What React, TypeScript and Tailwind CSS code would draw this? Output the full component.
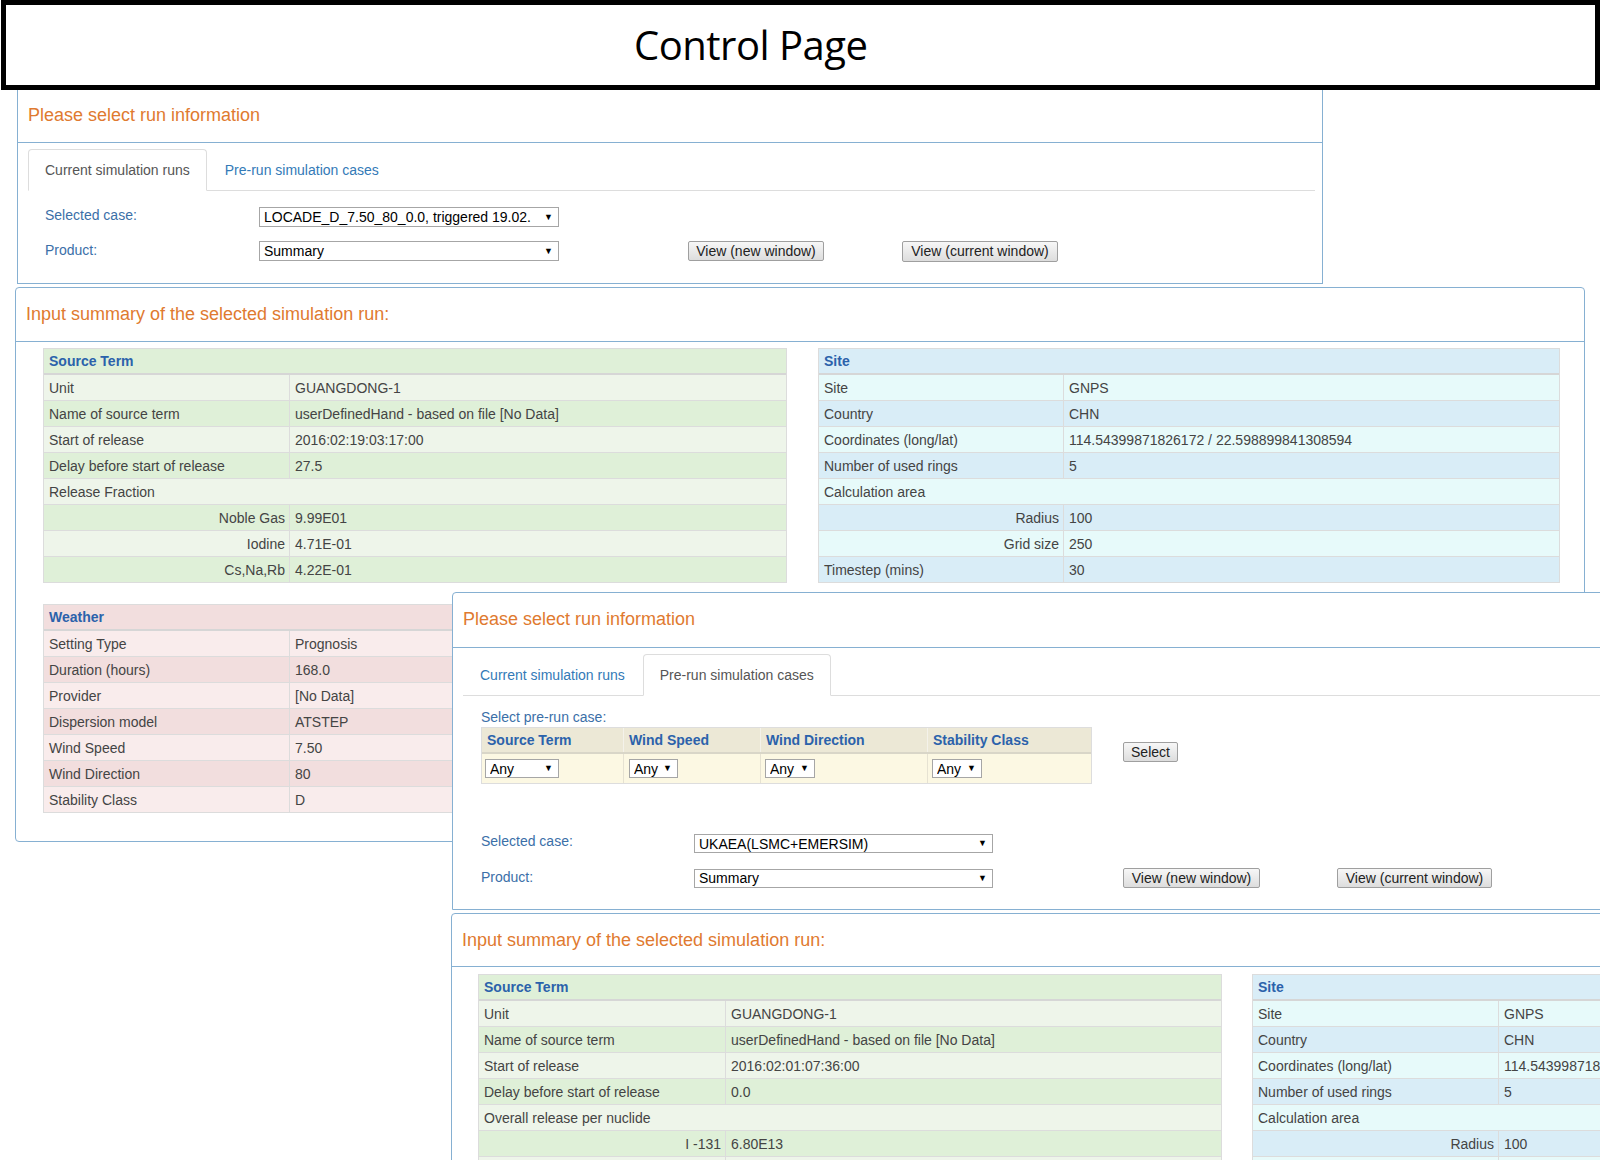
import React from "react";

type Row = { l: string; v?: string; right?: boolean; span?: boolean };
type Theme = { head: string; light: string; dark: string };

const GREEN: Theme = { head: "bg-[#dff0d8]", light: "bg-[#eef5ea]", dark: "bg-[#dff0d8]" };
const BLUE: Theme = { head: "bg-[#d9edf7]", light: "bg-[#e7fafa]", dark: "bg-[#d9edf7]" };
const RED: Theme = { head: "bg-[#f2dede]", light: "bg-[#f9ecec]", dark: "bg-[#f2dede]" };

function Sel({ text, className }: { text: string; className: string }) {
  return (
    <div
      className={`flex items-center border border-[#a6a6a6] bg-white pl-[4px] pr-[5px] text-[14px] leading-[16px] text-black ${className}`}
    >
      <span className="flex-1 overflow-hidden whitespace-nowrap leading-[16px]">{text}</span>
      <span className="ml-[3px] text-[9px] leading-none text-black">▼</span>
    </div>
  );
}

function Btn({ children, className }: { children: React.ReactNode; className: string }) {
  return (
    <div
      className={`flex items-center justify-center whitespace-nowrap rounded-[2px] border border-[#9f9f9f] bg-linear-to-b from-[#f7f7f7] to-[#dddddd] text-[14px] leading-none text-[#222] ${className}`}
    >
      {children}
    </div>
  );
}

function DataTable({
  title,
  rows,
  theme,
  labelW,
}: {
  title: string;
  rows: Row[];
  theme: Theme;
  labelW: string;
}) {
  return (
    <div className="border-x border-t border-[#dcdcdc] text-[14px] leading-[20px] text-[#444]">
      <div
        className={`flex h-[26px] items-center border-b-2 border-[#d6d6d6] pl-[5px] font-bold text-[#2b62ab] ${theme.head}`}
      >
        {title}
      </div>
      {rows.map((r, i) => (
        <div
          key={i}
          className={`flex h-[26px] border-b border-[#dcdcdc] ${i % 2 === 0 ? theme.light : theme.dark}`}
        >
          {r.span ? (
            <div className="flex items-center px-[5px]">{r.l}</div>
          ) : (
            <>
              <div
                className={`flex shrink-0 items-center border-r border-[#dcdcdc] ${labelW} ${
                  r.right ? "justify-end pr-[4px]" : "pl-[5px]"
                }`}
              >
                {r.l}
              </div>
              <div className="flex flex-1 items-center whitespace-nowrap px-[5px]">{r.v}</div>
            </>
          )}
        </div>
      ))}
    </div>
  );
}

function Heading({ children, className }: { children: React.ReactNode; className: string }) {
  return (
    <div
      className={`border-b border-[#86b0d2] px-[10px] text-[18px] leading-[20px] text-[#df7a30] ${className}`}
    >
      {children}
    </div>
  );
}

function Tabs({ active }: { active: 0 | 1 }) {
  const on =
    "-mb-[1px] rounded-t-[4px] border border-[#dddddd] border-b-white bg-white px-[16px] pt-[10px] pb-[10px] leading-[20px] text-[#555]";
  const off = "-mb-[1px] border border-transparent px-[16px] pt-[10px] pb-[10px] leading-[20px] text-[#337ab7]";
  return (
    <div className="flex border-b border-[#dddddd] text-[14px]">
      <div className={active === 0 ? on : off}>Current simulation runs</div>
      <div className={`ml-[1px] ${active === 1 ? on : off}`}>Pre-run simulation cases</div>
    </div>
  );
}

const sourceRows1: Row[] = [
  { l: "Unit", v: "GUANGDONG-1" },
  { l: "Name of source term", v: "userDefinedHand - based on file [No Data]" },
  { l: "Start of release", v: "2016:02:19:03:17:00" },
  { l: "Delay before start of release", v: "27.5" },
  { l: "Release Fraction", span: true },
  { l: "Noble Gas", v: "9.99E01", right: true },
  { l: "Iodine", v: "4.71E-01", right: true },
  { l: "Cs,Na,Rb", v: "4.22E-01", right: true },
];

const siteRows1: Row[] = [
  { l: "Site", v: "GNPS" },
  { l: "Country", v: "CHN" },
  { l: "Coordinates (long/lat)", v: "114.54399871826172 / 22.598899841308594" },
  { l: "Number of used rings", v: "5" },
  { l: "Calculation area", span: true },
  { l: "Radius", v: "100", right: true },
  { l: "Grid size", v: "250", right: true },
  { l: "Timestep (mins)", v: "30" },
];

const weatherRows: Row[] = [
  { l: "Setting Type", v: "Prognosis" },
  { l: "Duration (hours)", v: "168.0" },
  { l: "Provider", v: "[No Data]" },
  { l: "Dispersion model", v: "ATSTEP" },
  { l: "Wind Speed", v: "7.50" },
  { l: "Wind Direction", v: "80" },
  { l: "Stability Class", v: "D" },
];

const sourceRows2: Row[] = [
  { l: "Unit", v: "GUANGDONG-1" },
  { l: "Name of source term", v: "userDefinedHand - based on file [No Data]" },
  { l: "Start of release", v: "2016:02:01:07:36:00" },
  { l: "Delay before start of release", v: "0.0" },
  { l: "Overall release per nuclide", span: true },
  { l: "I -131", v: "6.80E13", right: true },
  { l: "", v: "", right: true },
];

const siteRows2: Row[] = [
  { l: "Site", v: "GNPS" },
  { l: "Country", v: "CHN" },
  { l: "Coordinates (long/lat)", v: "114.54399871826172 / 22.598899841308594" },
  { l: "Number of used rings", v: "5" },
  { l: "Calculation area", span: true },
  { l: "Radius", v: "100", right: true },
  { l: "", v: "", right: true },
];

export default function App() {
  return (
    <div className="relative h-[1160px] w-[1600px] overflow-hidden bg-white font-['Liberation_Sans',Arial,sans-serif]">
      {/* Title */}
      <div className="absolute left-[1px] top-0 z-20 flex h-[90px] w-[1599px] items-center border-[5px] border-black bg-white pl-[628px]">
        <span className="font-['Open_Sans',sans-serif] text-[40px] leading-none tracking-[-0.5px] text-black">
          Control Page
        </span>
      </div>

      {/* Panel 1 */}
      <section className="absolute left-[17px] top-[85px] z-0 h-[199px] w-[1306px] border border-[#86b0d2] bg-white">
        <Heading className="pt-[19px] pb-[17px]">Please select run information</Heading>
        <div className="pl-[10px] pr-[7px] pt-[6px]">
          <Tabs active={0} />
          <div className="pl-[17px] pt-[16px] text-[14px] leading-[20px]">
            <div className="flex h-[20px] items-center">
              <div className="-mt-[5px] w-[214px] text-[#3b6fa8]">Selected case:</div>
              <Sel text="LOCADE_D_7.50_80_0.0, triggered 19.02." className="h-[20px] w-[300px]" />
            </div>
            <div className="mt-[14px] flex h-[20px] items-center">
              <div className="-mt-[3px] w-[214px] text-[#3b6fa8]">Product:</div>
              <Sel text="Summary" className="h-[20px] w-[300px]" />
              <Btn className="ml-[129px] h-[20px] w-[136px]">View (new window)</Btn>
              <Btn className="ml-[78px] h-[21px] w-[156px]">View (current window)</Btn>
            </div>
          </div>
        </div>
      </section>

      {/* Panel 2 */}
      <section className="absolute left-[15px] top-[287px] z-0 h-[555px] w-[1570px] rounded-[4px] border border-[#86b0d2] bg-white">
        <Heading className="pt-[16px] pb-[17px]">Input summary of the selected simulation run:</Heading>
        <div className="grid grid-cols-[744px_742px] gap-x-[31px] gap-y-[21px] pl-[27px] pt-[6px]">
          <DataTable title="Source Term" rows={sourceRows1} theme={GREEN} labelW="w-[246px]" />
          <DataTable title="Site" rows={siteRows1} theme={BLUE} labelW="w-[245px]" />
          <DataTable title="Weather" rows={weatherRows} theme={RED} labelW="w-[246px]" />
        </div>
      </section>

      {/* Panel 3 */}
      <section className="absolute left-[452px] top-[592px] z-10 h-[318px] w-[1306px] rounded-tl-[4px] border border-[#86b0d2] bg-white">
        <Heading className="pt-[16px] pb-[18px]">Please select run information</Heading>
        <div className="px-[10px] pt-[6px]">
          <Tabs active={1} />
          <div className="pl-[18px] text-[14px] leading-[20px]">
            <div className="mt-[11px] text-[#3b6fa8]">Select pre-run case:</div>
            <div className="flex items-start">
              <div className="w-[611px] border-x border-t border-[#dddddd]">
                <div className="grid h-[26px] grid-cols-[142px_137px_167px_1fr] border-b-2 border-[#d9d6c8] bg-[#ece8d6] font-bold text-[#2b62ab]">
                  <div className="flex items-center border-r border-[#f4f2ea] pl-[5px]">Source Term</div>
                  <div className="flex items-center border-r border-[#f4f2ea] pl-[5px]">Wind Speed</div>
                  <div className="flex items-center border-r border-[#f4f2ea] pl-[5px]">Wind Direction</div>
                  <div className="flex items-center pl-[5px]">Stability Class</div>
                </div>
                <div className="grid h-[30px] grid-cols-[142px_137px_167px_1fr] border-b border-[#dddddd] bg-[#fcf8e3]">
                  <div className="flex items-center border-r border-[#e6e2d2] pl-[3px]">
                    <Sel text="Any" className="h-[19px] w-[74px]" />
                  </div>
                  <div className="flex items-center border-r border-[#e6e2d2] pl-[5px]">
                    <Sel text="Any" className="h-[19px] w-[49px]" />
                  </div>
                  <div className="flex items-center border-r border-[#e6e2d2] pl-[4px]">
                    <Sel text="Any" className="h-[19px] w-[50px]" />
                  </div>
                  <div className="flex items-center pl-[4px]">
                    <Sel text="Any" className="h-[19px] w-[50px]" />
                  </div>
                </div>
              </div>
              <Btn className="ml-[31px] mt-[15px] h-[20px] w-[55px]">Select</Btn>
            </div>
            <div className="mt-[50px] flex h-[19px] items-center">
              <div className="-mt-[5px] w-[213px] text-[#3b6fa8]">Selected case:</div>
              <Sel text="UKAEA(LSMC+EMERSIM)" className="h-[19px] w-[299px]" />
            </div>
            <div className="mt-[15px] flex h-[20px] items-center">
              <div className="-mt-[3px] w-[213px] text-[#3b6fa8]">Product:</div>
              <Sel text="Summary" className="h-[19px] w-[299px]" />
              <Btn className="ml-[130px] h-[20px] w-[137px]">View (new window)</Btn>
              <Btn className="ml-[77px] h-[20px] w-[155px]">View (current window)</Btn>
            </div>
          </div>
        </div>
      </section>

      {/* Panel 4 */}
      <section className="absolute left-[451px] top-[913px] z-10 h-[400px] w-[1570px] rounded-tl-[4px] border border-[#86b0d2] bg-white">
        <Heading className="pt-[16px] pb-[16px]">Input summary of the selected simulation run:</Heading>
        <div className="grid grid-cols-[744px_744px] gap-x-[30px] pl-[26px] pt-[7px]">
          <DataTable title="Source Term" rows={sourceRows2} theme={GREEN} labelW="w-[247px]" />
          <DataTable title="Site" rows={siteRows2} theme={BLUE} labelW="w-[246px]" />
        </div>
      </section>
    </div>
  );
}
